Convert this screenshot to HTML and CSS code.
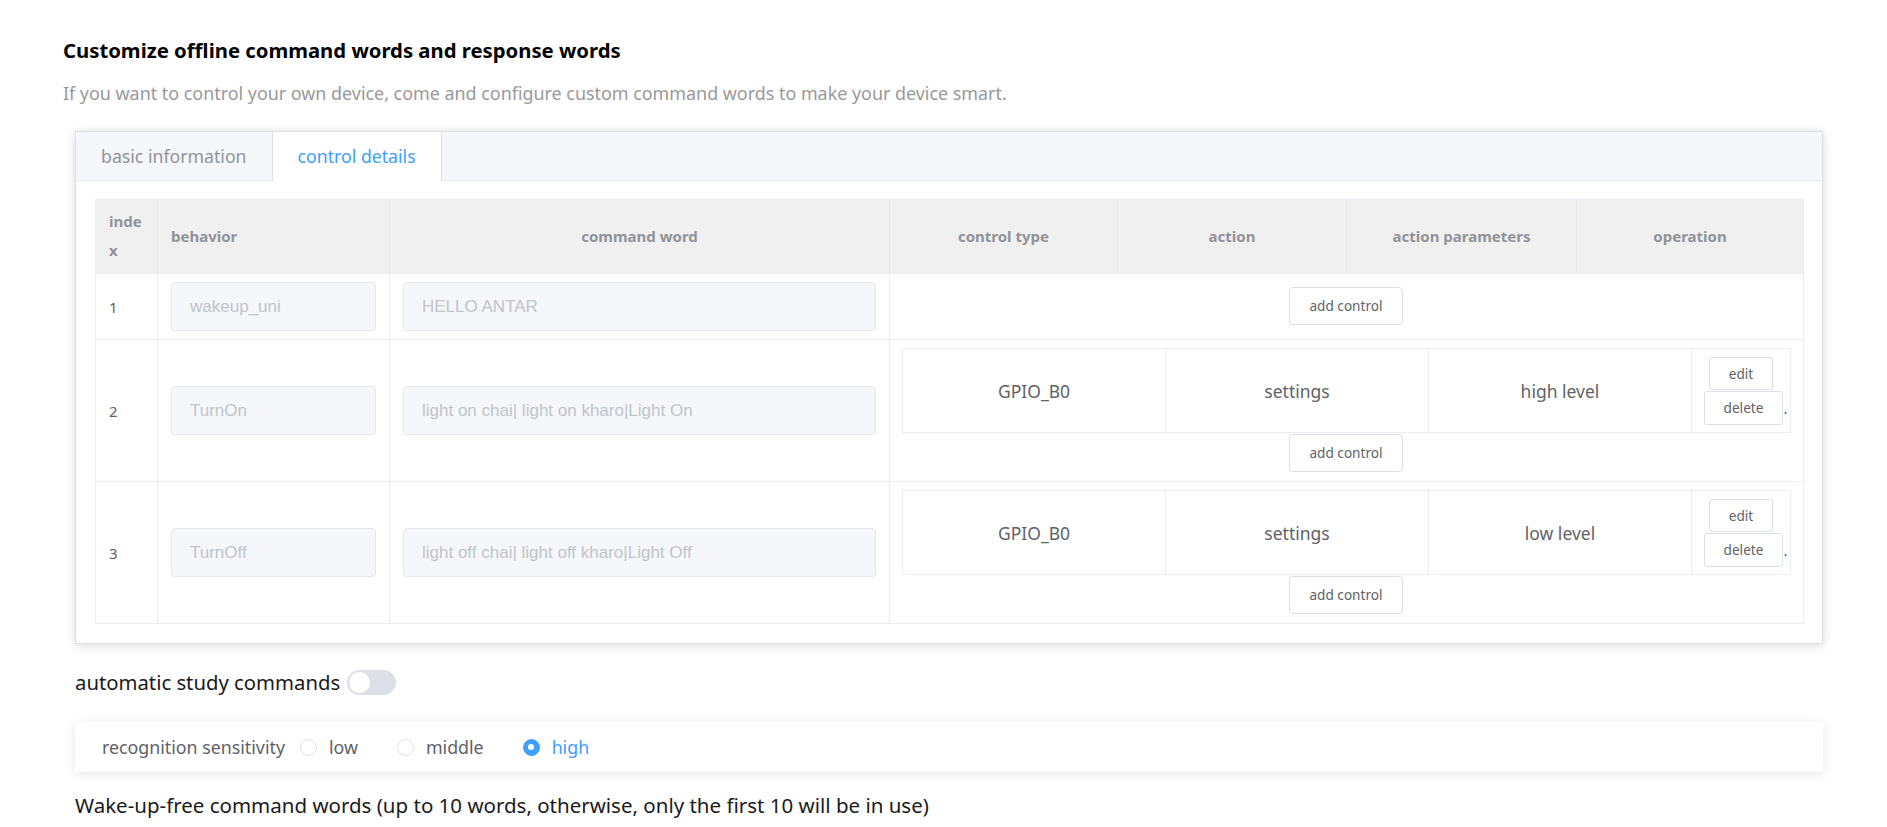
FILE: index.html
```html
<!DOCTYPE html>
<html>
<head>
<meta charset="utf-8">
<title>Custom command words</title>
<link rel="stylesheet" href="styles.css">
</head>
<body>
<div class="page">
  <h2 class="title">Customize offline command words and response words</h2>
  <p class="subtitle">If you want to control your own device, come and configure custom command words to make your device smart.</p>
  <div class="content">
    <div class="card">
      <div class="tabs">
        <div class="tab">basic information</div>
        <div class="tab active">control details</div>
      </div>
      <div class="card-body">
        <table class="grid">
          <colgroup>
            <col class="c-index"><col class="c-behavior"><col class="c-word"><col class="c-type"><col class="c-action"><col class="c-param"><col class="c-op">
          </colgroup>
          <thead>
            <tr>
              <th class="left">index</th>
              <th class="left">behavior</th>
              <th>command word</th>
              <th>control type</th>
              <th>action</th>
              <th>action parameters</th>
              <th>operation</th>
            </tr>
          </thead>
          <tbody>
            <tr>
              <td>1</td>
              <td><div class="input">wakeup_uni</div></td>
              <td><div class="input">HELLO ANTAR</div></td>
              <td colspan="4" class="ctl">
                <div class="add-wrap"><button class="btn">add control</button></div>
              </td>
            </tr>
            <tr>
              <td>2</td>
              <td><div class="input">TurnOn</div></td>
              <td><div class="input">light on chai| light on kharo|Light On</div></td>
              <td colspan="4" class="ctl">
                <table class="ctl-table">
                  <colgroup><col class="i-col"><col class="i-col"><col class="i-col"><col class="i-op"></colgroup>
                  <tr>
                    <td>GPIO_B0</td>
                    <td>settings</td>
                    <td>high level</td>
                    <td class="ops">
                      <div class="ops-stack">
                        <button class="btn sm">edit</button>
                        <span class="del-line"><button class="btn sm del">delete</button>.</span>
                      </div>
                    </td>
                  </tr>
                </table>
                <div class="add-wrap gap"><button class="btn">add control</button></div>
              </td>
            </tr>
            <tr>
              <td>3</td>
              <td><div class="input">TurnOff</div></td>
              <td><div class="input">light off chai| light off kharo|Light Off</div></td>
              <td colspan="4" class="ctl">
                <table class="ctl-table">
                  <colgroup><col class="i-col"><col class="i-col"><col class="i-col"><col class="i-op"></colgroup>
                  <tr>
                    <td>GPIO_B0</td>
                    <td>settings</td>
                    <td>low level</td>
                    <td class="ops">
                      <div class="ops-stack">
                        <button class="btn sm">edit</button>
                        <span class="del-line"><button class="btn sm del">delete</button>.</span>
                      </div>
                    </td>
                  </tr>
                </table>
                <div class="add-wrap gap"><button class="btn">add control</button></div>
              </td>
            </tr>
          </tbody>
        </table>
      </div>
    </div>

    <div class="auto">
      <span>automatic study commands</span>
      <span class="switch"><span class="knob"></span></span>
    </div>

    <div class="sense">
      <span class="sense-label">recognition sensitivity</span>
      <span class="radio"><span class="radio-dot"></span>low</span>
      <span class="radio"><span class="radio-dot"></span>middle</span>
      <span class="radio on"><span class="radio-dot"><span class="radio-in"></span></span>high</span>
    </div>

    <div class="wake">Wake-up-free command words (up to 10 words, otherwise, only the first 10 will be in use)</div>
  </div>
</div>
</body>
</html>
```

FILE: styles.css
```css
body {
  margin: 0;
  background: #fff;
  font-family: "Noto Sans", "Open Sans", sans-serif;
}

.page {
  padding: 36px 64px 0 63px;
}

.title {
  margin: 0;
  font-size: 20.3px;
  font-weight: 700;
  line-height: 28px;
  color: #000;
}

.subtitle {
  margin: 17px 0 0;
  font-size: 17.9px;
  line-height: 24px;
  color: #999;
}

.content {
  margin-left: 12px;
}

.card {
  margin-top: 26px;
  background: #fff;
  border: 1px solid #dcdfe6;
  box-shadow: 0 2px 12px 0 rgba(0, 0, 0, 0.12), 0 0 6px 0 rgba(0, 0, 0, 0.04);
}

.tabs {
  display: flex;
  height: 48px;
  background: #f5f7fa;
  border-bottom: 1px solid #e4e7ed;
}

.tab {
  box-sizing: border-box;
  height: 49px;
  margin-left: -1px;
  padding: 0 25px;
  line-height: 48px;
  font-size: 17.7px;
  color: #909399;
  border-left: 1px solid transparent;
  border-right: 1px solid transparent;
}

.tab.active {
  background: #fff;
  color: #409eff;
  border-left-color: #dcdfe6;
  border-right-color: #dcdfe6;
}

.card-body {
  padding: 18px 19px 19px;
}

.grid {
  width: 100%;
  border-collapse: collapse;
  table-layout: fixed;
  border: 1px solid #ebeef5;
}

.c-index { width: 62px; }
.c-behavior { width: 232px; }
.c-word { width: 500px; }
.c-type { width: 228px; }
.c-action { width: 229px; }
.c-param { width: 230px; }
.c-op { width: 227px; }

.grid th {
  background: #f0f0f0;
  color: #909399;
  font-size: 15px;
  font-weight: 700;
  line-height: 29px;
  padding: 7px 13px 8px;
  text-align: center;
  vertical-align: middle;
  word-break: break-all;
  border-right: 1px solid #e8e8e8;
  border-bottom: 1px solid #ebeef5;
}

.grid th.left {
  text-align: left;
}

.grid > tbody > tr > td {
  padding: 8px 13px;
  vertical-align: middle;
  color: #606266;
  font-size: 15px;
  border-right: 1px solid #ebeef5;
  border-bottom: 1px solid #ebeef5;
}

.input {
  box-sizing: border-box;
  height: 49px;
  padding: 0 18px;
  border: 1px solid #e4e7ed;
  border-radius: 4px;
  background: #f5f7fa;
  color: #c0c4cc;
  font-family: "Liberation Sans", Arial, sans-serif;
  font-size: 17px;
  line-height: 47px;
  white-space: nowrap;
  overflow: hidden;
}

.grid > tbody > tr > td.ctl {
  padding: 8px 13px 9px 12px;
}

.add-wrap {
  display: flex;
  justify-content: center;
}

.add-wrap.gap {
  margin-top: 1px;
}

.btn {
  box-sizing: border-box;
  height: 38px;
  padding: 0 19px;
  border: 1px solid #dcdfe6;
  border-radius: 4px;
  background: #fff;
  color: #606266;
  font-family: "Noto Sans", sans-serif;
  font-size: 13.6px;
  line-height: 36px;
  cursor: pointer;
}

.btn.sm {
  height: 33px;
  line-height: 31px;
  border-radius: 3px;
}

.btn.sm.del {
  height: 34px;
  line-height: 32px;
}

.ctl-table {
  width: 100%;
  border-collapse: collapse;
  table-layout: fixed;
  border: 1px solid #ebeef5;
}

.i-col { width: 263px; }
.i-op { width: 99px; }

.ctl-table td {
  height: 83px;
  padding: 0;
  text-align: center;
  vertical-align: middle;
  color: #606266;
  font-size: 17.5px;
  border-right: 1px solid #ebeef5;
}

.ops-stack {
  display: flex;
  flex-direction: column;
  align-items: center;
  gap: 1px;
  padding-top: 1px;
}

.del-line {
  display: flex;
  align-items: center;
  padding-left: 9px;
  font-size: 15px;
  color: #606266;
  line-height: 16px;
}

.auto {
  margin-top: 24px;
  display: flex;
  align-items: center;
  font-size: 20.3px;
  line-height: 28px;
  color: #1a1a1a;
}

.switch {
  box-sizing: border-box;
  display: flex;
  align-items: center;
  width: 49px;
  height: 25px;
  margin-left: 7px;
  padding: 0 2px;
  border-radius: 13px;
  background: #dcdfe6;
}

.knob {
  width: 21px;
  height: 21px;
  border-radius: 50%;
  background: #fff;
}

.sense {
  margin-top: 26px;
  height: 50px;
  display: flex;
  align-items: center;
  padding-left: 27px;
  background: #fff;
  box-shadow: 0 2px 12px 0 rgba(0, 0, 0, 0.1);
  font-size: 17.8px;
  color: #606266;
}

.sense-label {
  margin-right: 15px;
}

.radio {
  display: flex;
  align-items: center;
  margin-right: 39px;
}

.radio-dot {
  box-sizing: border-box;
  display: flex;
  align-items: center;
  justify-content: center;
  width: 17px;
  height: 17px;
  margin-right: 12px;
  border: 1px solid #dcdfe6;
  border-radius: 50%;
  background: #fff;
}

.radio.on {
  color: #409eff;
}

.radio.on .radio-dot {
  background: #409eff;
  border-color: #409eff;
}

.radio-in {
  width: 6px;
  height: 6px;
  border-radius: 50%;
  background: #fff;
}

.wake {
  margin-top: 19px;
  font-size: 20.5px;
  line-height: 28px;
  color: #1a1a1a;
}
```
